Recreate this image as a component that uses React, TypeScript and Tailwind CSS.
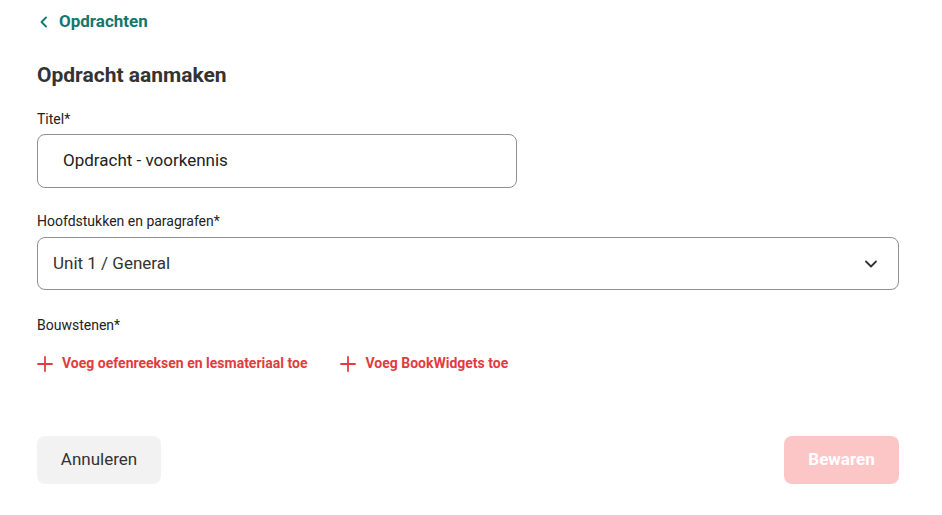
import React from "react";

export default function App() {
  return (
    <div className="w-[942px] h-[515px] bg-white" style={{ fontFamily: "Roboto, 'Liberation Sans', sans-serif" }}>
      <div className="pl-[37px] pr-[43px] pt-[12px]">
        <a className="flex items-center gap-[10px] h-[20px] pl-[2px] text-[#12776f] font-bold text-[17px]">
          <svg width="10" height="12" viewBox="0 0 10 12" fill="none">
            <path d="M7 1.5L2.5 6L7 10.5" stroke="#12776f" strokeWidth="1.8" strokeLinecap="round" strokeLinejoin="round" />
          </svg>
          <span>Opdrachten</span>
        </a>
        <h1 className="mt-[31px] text-[21px] leading-[24px] font-bold text-[#333333]">Opdracht aanmaken</h1>

        <div className="mt-[24px] text-[14px] leading-[16px] text-[#222]">Titel*</div>
        <div className="mt-[7px] w-[480px] h-[54px] border border-[#8f8f8f] rounded-[8px] flex items-center pl-[25px] text-[17px] text-[#222]">
          Opdracht - voorkennis
        </div>

        <div className="mt-[25px] text-[14px] leading-[16px] text-[#222]">Hoofdstukken en paragrafen*</div>
        <div className="mt-[8px] w-[862px] h-[53px] border border-[#8f8f8f] rounded-[8px] flex items-center justify-between pl-[15px] pr-[20px] text-[17px] text-[#333]">
          <span>Unit 1 / General</span>
          <svg width="14" height="10" viewBox="0 0 14 10" fill="none">
            <path d="M2 2.5L7 7.5L12 2.5" stroke="#333" strokeWidth="1.8" strokeLinecap="round" strokeLinejoin="round" />
          </svg>
        </div>

        <div className="mt-[27px] text-[14px] leading-[16px] text-[#222]">Bouwstenen*</div>
        <div className="mt-[20px] flex items-center gap-[33px] text-[14px] font-bold text-[#e23b40]">
          <div className="flex items-center gap-[9px]">
            <svg width="16" height="16" viewBox="0 0 16 16" fill="none">
              <path d="M8 1V15M1 8H15" stroke="#e23b40" strokeWidth="1.8" strokeLinecap="round" />
            </svg>
            <span>Voeg oefenreeksen en lesmateriaal toe</span>
          </div>
          <div className="flex items-center gap-[9px]">
            <svg width="16" height="16" viewBox="0 0 16 16" fill="none">
              <path d="M8 1V15M1 8H15" stroke="#e23b40" strokeWidth="1.8" strokeLinecap="round" />
            </svg>
            <span>Voeg BookWidgets toe</span>
          </div>
        </div>

        <div className="mt-[62px] flex justify-between">
          <button className="w-[124px] h-[48px] rounded-[8px] bg-[#f2f2f2] text-[17px] text-[#333]">Annuleren</button>
          <button className="w-[115px] h-[48px] rounded-[8px] bg-[#fdc6c6] text-[17px] font-bold text-white">Bewaren</button>
        </div>
      </div>
    </div>
  );
}
